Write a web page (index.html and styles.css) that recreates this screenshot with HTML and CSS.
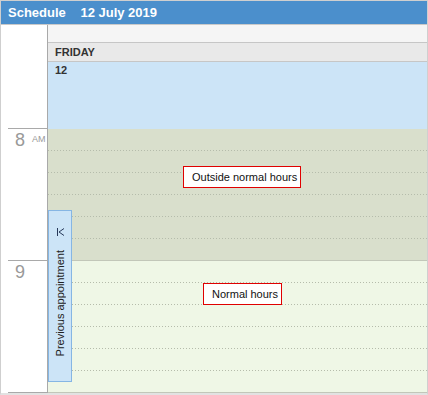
FILE: index.html
```html
<!DOCTYPE html>
<html lang="en">
<head>
    <meta charset="UTF-8">
    <meta name="viewport" content="width=device-width, initial-scale=1.0">
    <title>Schedule</title>
    <link rel="stylesheet" href="styles.css">
</head>
<body>
    <div class="scheduler">
        <div class="scheduler-header">
            <span class="title">Schedule</span>
            <span class="date">12 July 2019</span>
        </div>
        <div class="scheduler-body">
            <div class="time-column">
                <div class="time-spacer"></div>
                <div class="hour-label"><span class="hour">8</span><span class="ampm">AM</span></div>
                <div class="hour-label"><span class="hour">9</span></div>
                <div class="hour-label"></div>
            </div>
            <div class="day-column">
                <div class="day-top"></div>
                <div class="day-name">FRIDAY</div>
                <div class="all-day">12</div>
                <div class="hour-block outside">
                    <div class="slot"></div>
                    <div class="slot"></div>
                    <div class="slot"></div>
                    <div class="slot"></div>
                    <div class="slot"></div>
                    <div class="slot last"></div>
                    <div class="note note-outside">Outside normal hours</div>
                </div>
                <div class="hour-block normal">
                    <div class="slot"></div>
                    <div class="slot"></div>
                    <div class="slot"></div>
                    <div class="slot"></div>
                    <div class="slot"></div>
                    <div class="slot last"></div>
                    <div class="note note-normal">Normal hours</div>
                </div>
                <div class="prev-tab">
                    <svg class="prev-icon" width="9" height="10" viewBox="0 0 9 10">
                        <path d="M1.5 1 V9" stroke="#27395a" stroke-width="1" fill="none"/>
                        <path d="M8 1.5 L3 5 L8 8.5" stroke="#27395a" stroke-width="1" fill="none"/>
                    </svg>
                    <span class="prev-text">Previous appointment</span>
                </div>
            </div>
        </div>
    </div>
</body>
</html>
```

FILE: styles.css
```css
body {
    margin: 0;
    font-family: 'Liberation Sans', Arial, sans-serif;
    background: #ffffff;
}
.scheduler {
    width: 428px;
    height: 395px;
    box-sizing: border-box;
    border: 1px solid #cfcfcf;
    border-bottom: 2px solid #e2e2e2;
    display: flex;
    flex-direction: column;
    overflow: hidden;
}
.scheduler-header {
    height: 23px;
    background-color: #4b8fcc; /* blue title bar */
    border-bottom: 1px solid #c9c9c9;
    color: #ffffff;
    font-weight: bold;
    font-size: 13px;
    line-height: 23px;
    padding-left: 7px;
    flex: none;
}
.scheduler-header .date {
    margin-left: 11px;
}
.scheduler-body {
    display: flex;
    flex: 1;
    min-height: 0;
}
.time-column {
    width: 46px;
    border-right: 1px solid #a9a9a9;
    flex: none;
}
.time-spacer {
    height: 103px;
}
.hour-label {
    height: 131px;
    margin-left: 7px;
    border-top: 1px solid #a9a9a9;
    display: flex;
    align-items: flex-start;
    color: #999999;
}
.hour-label .hour {
    font-size: 18px;
    margin-left: 7px;
    margin-top: 1px;
}
.hour-label .ampm {
    font-size: 9px;
    margin-left: 7px;
    margin-top: 5px;
}
.day-column {
    flex: 1;
    position: relative;
}
.day-top {
    height: 17px;
    background: #f5f5f5;
    border-bottom: 1px solid #c6c6c6;
}
.day-name {
    height: 18px;
    background: #e9e9e9;
    border-bottom: 1px solid #c6c6c6;
    font-size: 11px;
    font-weight: bold;
    color: #333333;
    line-height: 19px;
    padding-left: 7px;
}
.all-day {
    height: 67px;
    background: #cce4f7;
    font-size: 11px;
    font-weight: bold;
    color: #333333;
    padding-left: 7px;
    line-height: 17px;
    box-sizing: border-box;
}
.hour-block {
    position: relative;
}
.hour-block.outside {
    background: #d9dfcc;
}
.hour-block.normal {
    background: #eff7e6;
}
.slot {
    height: 22px;
    box-sizing: border-box;
    background-image: linear-gradient(to right, #b5bcab 1px, transparent 1px);
    background-size: 3px 1px;
    background-repeat: repeat-x;
    background-position: 0 bottom;
}
.slot.last {
    background: none;
    border-bottom: 1px solid #c2c7b9;
}
.note {
    position: absolute;
    background: #ffffff;
    border: 1px solid #e00000;
    font-size: 11px;
    color: #111111;
    line-height: 20px;
    box-sizing: border-box;
    height: 22px;
    padding: 0 3px 0 8px;
}
.note-outside {
    left: 135px;
    top: 37px;
}
.note-normal {
    left: 155px;
    top: 22px;
}
.prev-tab {
    position: absolute;
    left: 0;
    top: 185px;
    width: 24px;
    height: 172px;
    box-sizing: border-box;
    background: #cce4f7;
    border: 1px solid #86b6e4;
    display: flex;
    flex-direction: column;
    align-items: center;
}
.prev-icon {
    margin-top: 16px;
    margin-left: 1px;
}
.prev-text {
    writing-mode: vertical-rl;
    transform: rotate(180deg);
    font-size: 11px;
    color: #222222;
    margin-top: 13px;
}
```
